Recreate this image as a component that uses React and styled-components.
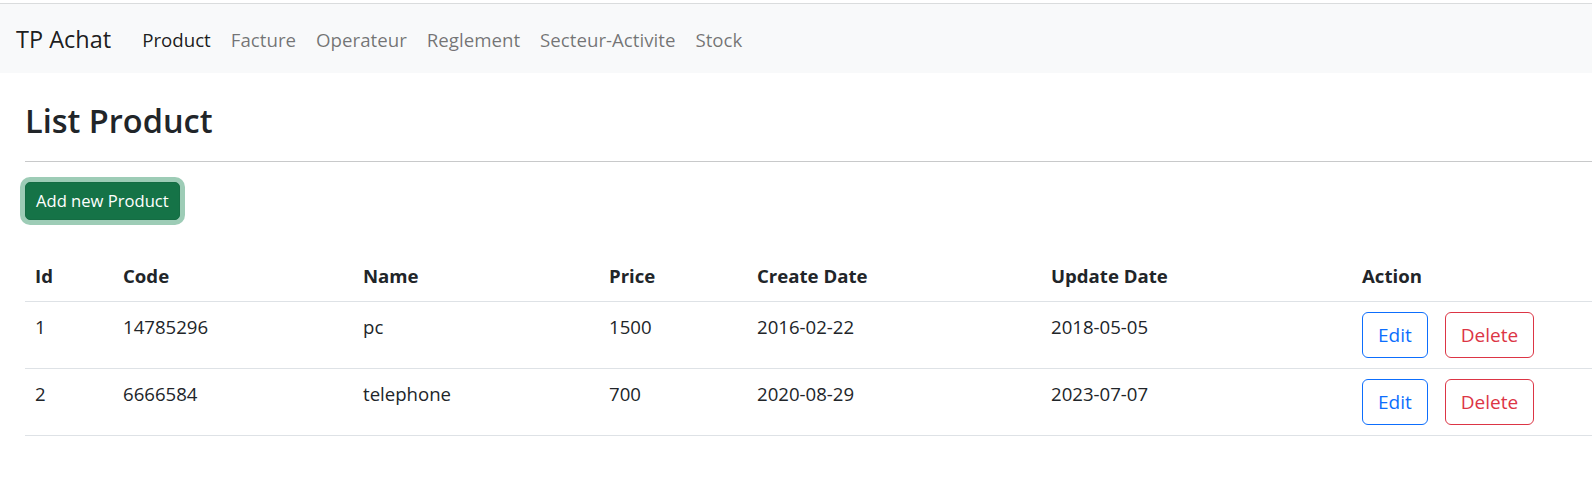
import React from "react";
import styled, { createGlobalStyle } from "styled-components";

const GlobalStyle = createGlobalStyle`
  html, body {
    margin: 0;
    padding: 0;
    background: #ffffff;
  }
  body {
    font-family: "Open Sans", "Noto Sans", sans-serif;
    color: #212529;
    overflow: hidden;
    padding-top: 3px;
  }
  * { box-sizing: border-box; }
`;

const Navbar = styled.nav`
  display: flex;
  align-items: center;
  height: 70px;
  padding: 3px 16px 0 16px;
  background: #f8f9fa;
  border-top: 1px solid #dadcdd;
`;

const Brand = styled.a`
  font-size: 23.5px;
  line-height: 1.5;
  color: rgba(0, 0, 0, 0.9);
  text-decoration: none;
  margin-right: 21px;
  white-space: nowrap;
`;

const NavList = styled.ul`
  display: flex;
  list-style: none;
  margin: 0;
  padding: 0;
`;

const NavLink = styled.a`
  display: block;
  padding: 0 10px;
  font-size: 18.7px;
  line-height: 1.5;
  text-decoration: none;
  white-space: nowrap;
  color: ${(p) => (p.$active ? "rgba(0, 0, 0, 0.9)" : "rgba(0, 0, 0, 0.55)")};
`;

const Main = styled.main`
  padding-left: 25px;
  width: 1760px;
`;

const Title = styled.h2`
  margin: 28px 0 20px 0;
  font-size: 32.5px;
  line-height: 40px;
  font-weight: 600;
  color: #212529;
`;

const Rule = styled.hr`
  margin: 0 0 20px 0;
  border: 0;
  border-top: 1px solid #c8c9ca;
`;

const ToolRow = styled.div`
  display: flex;
  margin-bottom: 31px;
`;

const AddButton = styled.button`
  height: 38px;
  padding: 0 10px;
  font-family: inherit;
  font-size: 16.6px;
  line-height: 1.5;
  color: #ffffff;
  background: #157347;
  border: 1px solid #146c43;
  border-radius: 5px;
  box-shadow: 0 0 0 5px rgba(60, 153, 110, 0.5);
`;

const Table = styled.table`
  width: 1727px;
  border-collapse: collapse;
  table-layout: fixed;
  color: #212529;
`;

const HeadCell = styled.th`
  text-align: left;
  font-weight: 700;
  font-size: 18.6px;
  line-height: 30px;
  padding: 10px;
  vertical-align: top;
  border-bottom: 1px solid #dee2e6;
`;

const Cell = styled.td`
  font-size: 18.6px;
  line-height: 30px;
  padding: 10px;
  vertical-align: top;
  border-bottom: 1px solid #dee2e6;
`;

const ActionGroup = styled.div`
  display: flex;
  gap: 17px;
`;

const OutlineButton = styled.button`
  height: 46px;
  padding: 0 15px;
  font-family: inherit;
  font-size: 19px;
  line-height: 1.5;
  background: transparent;
  border-radius: 6px;
  border: 1px solid ${(p) => p.$color};
  color: ${(p) => p.$color};
`;

const columns = [
  { label: "Id", width: 88 },
  { label: "Code", width: 240 },
  { label: "Name", width: 246 },
  { label: "Price", width: 148 },
  { label: "Create Date", width: 294 },
  { label: "Update Date", width: 311 },
  { label: "Action" },
];

const products = [
  { id: 1, code: "14785296", name: "pc", price: 1500, created: "2016-02-22", updated: "2018-05-05" },
  { id: 2, code: "6666584", name: "telephone", price: 700, created: "2020-08-29", updated: "2023-07-07" },
];

const links = ["Product", "Facture", "Operateur", "Reglement", "Secteur-Activite", "Stock"];

export default function App() {
  return (
    <>
      <GlobalStyle />
      <Navbar>
        <Brand href="#">TP Achat</Brand>
        <NavList>
          {links.map((l, i) => (
            <li key={l}>
              <NavLink href="#" $active={i === 0}>
                {l}
              </NavLink>
            </li>
          ))}
        </NavList>
      </Navbar>
      <Main>
        <Title>List Product</Title>
        <Rule />
        <ToolRow>
          <AddButton>Add new Product</AddButton>
        </ToolRow>
        <Table>
          <colgroup>
            {columns.map((c) => (
              <col key={c.label} style={c.width ? { width: c.width } : undefined} />
            ))}
          </colgroup>
          <thead>
            <tr>
              {columns.map((c) => (
                <HeadCell key={c.label}>{c.label}</HeadCell>
              ))}
            </tr>
          </thead>
          <tbody>
            {products.map((p) => (
              <tr key={p.id}>
                <Cell>{p.id}</Cell>
                <Cell>{p.code}</Cell>
                <Cell>{p.name}</Cell>
                <Cell>{p.price}</Cell>
                <Cell>{p.created}</Cell>
                <Cell>{p.updated}</Cell>
                <Cell>
                  <ActionGroup>
                    <OutlineButton $color="#0d6efd">Edit</OutlineButton>
                    <OutlineButton $color="#dc3545">Delete</OutlineButton>
                  </ActionGroup>
                </Cell>
              </tr>
            ))}
          </tbody>
        </Table>
      </Main>
    </>
  );
}
